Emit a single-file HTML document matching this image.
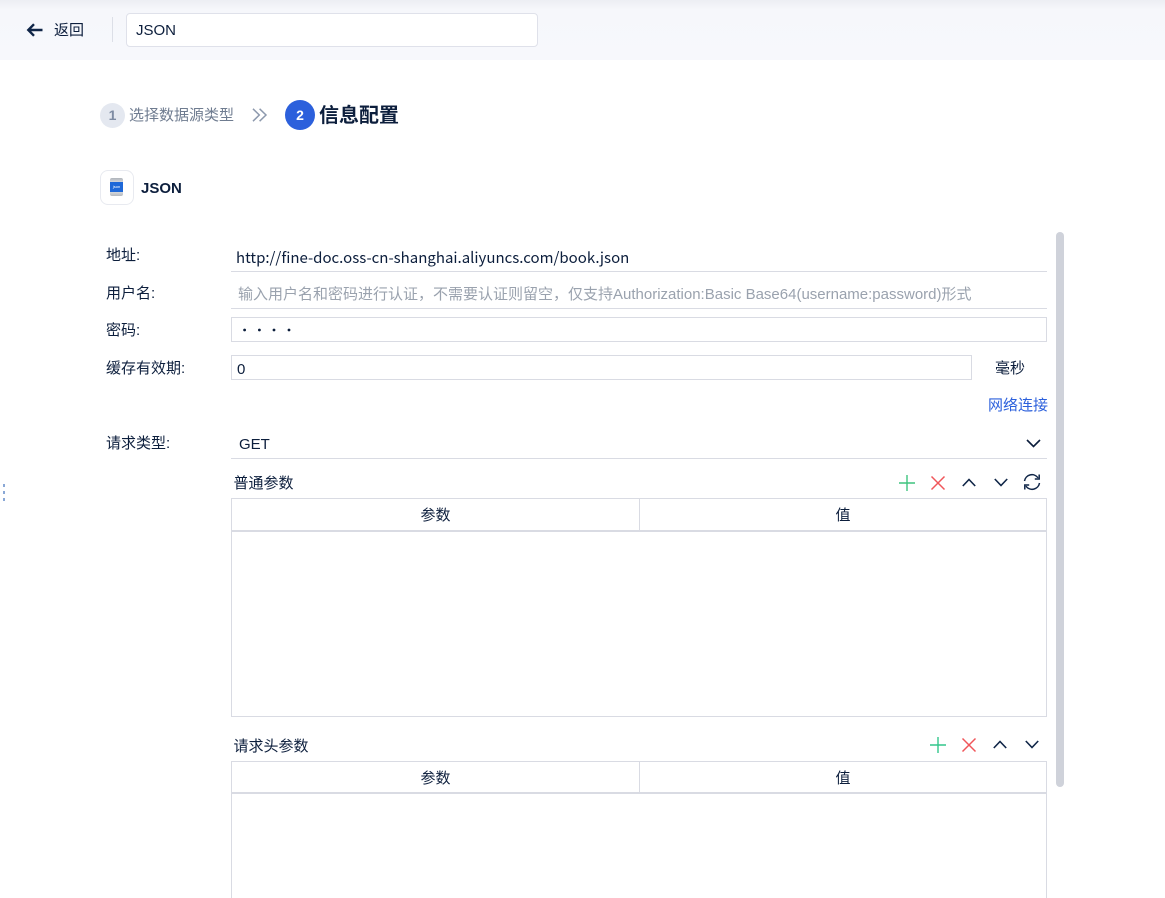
<!DOCTYPE html>
<html lang="zh"><head><meta charset="utf-8"><title>JSON</title>
<style>
html,body{margin:0;padding:0;background:#fff;width:1165px;height:898px;overflow:hidden}
#p{position:relative;width:1165px;height:898px;overflow:hidden;font-family:"Liberation Sans","Noto Sans CJK SC",sans-serif;font-size:15px;color:#0c1e3c}
.a{position:absolute;white-space:nowrap;line-height:20px}
.b{position:absolute;box-sizing:border-box}
.line{position:absolute;height:1px;background:#d9dbe3}
.box{position:absolute;box-sizing:border-box;border:1px solid #d9dbe3;background:#fff}
svg{position:absolute;overflow:visible;fill:none}
</style></head><body><div id="p">
<div class="b" style="left:0;top:0;width:1165px;height:60px;background:linear-gradient(#eceef3 0,#f6f7fb 10px,#f7f8fc 100%)"></div>
<svg style="left:26px;top:22px" width="18" height="16" viewBox="0 0 18 16"><path d="M16.5 8H2.5M8 2.2L2.3 8L8 13.8" stroke="#0f2547" stroke-width="2.4"/></svg>
<div class="a" style="left:54px;top:21px">返回</div>
<div class="b" style="left:112px;top:17px;width:1px;height:25px;background:#dcdfe7"></div>
<div class="box" style="left:126px;top:13px;width:412px;height:34px;border-radius:4px;border-color:#dfe1ea"></div>
<div class="a" style="left:136px;top:21px">JSON</div>

<div class="b" style="left:100px;top:103px;width:25px;height:25px;border-radius:50%;background:#e4e8f0"></div>
<div class="a" style="left:100px;top:105px;width:25px;text-align:center;font-weight:bold;font-size:14px;color:#7d8ba3">1</div>
<div class="a" style="left:129px;top:106px;color:#6f7c90">选择数据源类型</div>
<svg style="left:252px;top:108px" width="16" height="14" viewBox="0 0 16 14"><path d="M1 .8L7.3 7L1 13.2M7.6 .8L14 7L7.6 13.2" stroke="#8d99ad" stroke-width="1.5"/></svg>
<div class="b" style="left:285px;top:100px;width:30px;height:30px;border-radius:50%;background:#2c60dc"></div>
<div class="a" style="left:285px;top:105px;width:30px;text-align:center;font-weight:bold;font-size:14px;color:#fff">2</div>
<div class="a" style="left:319px;top:104px;font-size:20px;line-height:24px;font-weight:bold;color:#0c1e3c">信息配置</div>

<div class="box" style="left:100px;top:170px;width:34px;height:35px;border-radius:8px;border-color:#e8eaf0"></div>
<div class="b" style="left:110px;top:178px;width:13px;height:18px;border-radius:2px;background:linear-gradient(#aeb3ba,#d8dade 25%,#d8dade 75%,#b5b9bf)"></div>
<div class="b" style="left:110px;top:182px;width:13px;height:10px;background:#1e68d8"></div>
<div class="a" style="left:110px;top:182px;width:13px;height:10px;text-align:center;font-size:4px;line-height:10px;color:#fff">json</div>
<div class="a" style="left:141px;top:179px;font-weight:bold">JSON</div>

<div class="b" style="left:1056px;top:232px;width:8px;height:555px;border-radius:4px;background:#cfd2da"></div>

<div class="a" style="left:106px;top:246px">地址:</div>
<div class="a" style="left:236px;top:248px;font-family:'Noto Sans CJK SC',sans-serif;font-size:15px">http://fine-doc.oss-cn-shanghai.aliyuncs.com/book.json</div>
<div class="line" style="left:231px;top:271px;width:816px"></div>

<div class="a" style="left:106px;top:284px">用户名:</div>
<div class="a" style="left:238px;top:285px;color:#9aa2ae">输入用户名和密码进行认证，不需要认证则留空，仅支持Authorization:Basic Base64(username:password)形式</div>
<div class="line" style="left:231px;top:308px;width:816px"></div>

<div class="a" style="left:106px;top:321px">密码:</div>
<div class="box" style="left:231px;top:317px;width:816px;height:25px"></div>
<svg style="left:243px;top:328px" width="50" height="4"><circle cx="1.6" cy="2" r="1.4" fill="#0c1e3c"/><circle cx="16.4" cy="2" r="1.4" fill="#0c1e3c"/><circle cx="31" cy="2" r="1.4" fill="#0c1e3c"/><circle cx="46" cy="2" r="1.4" fill="#0c1e3c"/></svg>

<div class="a" style="left:106px;top:359px">缓存有效期:</div>
<div class="box" style="left:231px;top:355px;width:741px;height:25px"></div>
<div class="a" style="left:237px;top:360px">0</div>
<div class="a" style="left:995px;top:359px">毫秒</div>

<div class="a" style="left:988px;top:396px;color:#2c60dc">网络连接</div>

<div class="a" style="left:106px;top:434px">请求类型:</div>
<div class="a" style="left:239px;top:435px">GET</div>
<svg style="left:1026px;top:439px" width="15" height="9" viewBox="0 0 15 9"><path d="M1 1L7.5 7.5L14 1" stroke="#0c1e3c" stroke-width="1.6"/></svg>
<div class="line" style="left:231px;top:458px;width:816px"></div>

<div class="a" style="left:233.5px;top:474px">普通参数</div>
<svg style="left:899px;top:475px" width="16" height="16"><path d="M8 0V16M0 8H16" stroke="#3fc47f" stroke-width="1.4"/></svg>
<svg style="left:931px;top:476px" width="14" height="14"><path d="M.5 .5L13.5 13.5M13.5 .5L.5 13.5" stroke="#f0565a" stroke-width="1.5"/></svg>
<svg style="left:962px;top:478px" width="14" height="9"><path d="M.8 8L7 1.5L13.2 8" stroke="#0f2547" stroke-width="1.6"/></svg>
<svg style="left:994px;top:478px" width="14" height="9"><path d="M.8 1L7 7.5L13.2 1" stroke="#0f2547" stroke-width="1.6"/></svg>
<svg style="left:1023px;top:473px" width="18" height="18" viewBox="0 0 18 18"><path d="M1.5 8A7.5 7.5 0 0 1 15 4.8M16.5 10A7.5 7.5 0 0 1 3 13.2" stroke="#0f2547" stroke-width="1.5"/><path d="M16.2 1.5V6H11.8M1.8 16.5V12H6.2" stroke="#0f2547" stroke-width="1.5"/></svg>

<div class="box" style="left:231px;top:498px;width:816px;height:219px"></div>
<div class="line" style="left:231px;top:530px;width:816px;height:2px"></div>
<div class="b" style="left:639px;top:498px;width:1px;height:33px;background:#d9dbe3"></div>
<div class="a" style="left:232px;top:506px;width:407px;text-align:center">参数</div>
<div class="a" style="left:640px;top:506px;width:406px;text-align:center">值</div>

<div class="a" style="left:233.5px;top:737px">请求头参数</div>
<svg style="left:930px;top:737px" width="16" height="16"><path d="M8 0V16M0 8H16" stroke="#32c68c" stroke-width="1.4"/></svg>
<svg style="left:962px;top:738px" width="14" height="14"><path d="M.5 .5L13.5 13.5M13.5 .5L.5 13.5" stroke="#f0565a" stroke-width="1.5"/></svg>
<svg style="left:993px;top:740px" width="14" height="9"><path d="M.8 8L7 1.5L13.2 8" stroke="#0f2547" stroke-width="1.6"/></svg>
<svg style="left:1025px;top:740px" width="14" height="9"><path d="M.8 1L7 7.5L13.2 1" stroke="#0f2547" stroke-width="1.6"/></svg>

<div class="box" style="left:231px;top:761px;width:816px;height:160px"></div>
<div class="line" style="left:231px;top:792px;width:816px;height:2px"></div>
<div class="b" style="left:639px;top:761px;width:1px;height:32px;background:#d9dbe3"></div>
<div class="a" style="left:232px;top:769px;width:407px;text-align:center">参数</div>
<div class="a" style="left:640px;top:769px;width:406px;text-align:center">值</div>

<div class="b" style="left:3px;top:484px;width:2px;height:3px;background:#8aa8d6"></div>
<div class="b" style="left:3px;top:491px;width:2px;height:3px;background:#8aa8d6"></div>
<div class="b" style="left:3px;top:498px;width:2px;height:3px;background:#8aa8d6"></div>
</div></body></html>
